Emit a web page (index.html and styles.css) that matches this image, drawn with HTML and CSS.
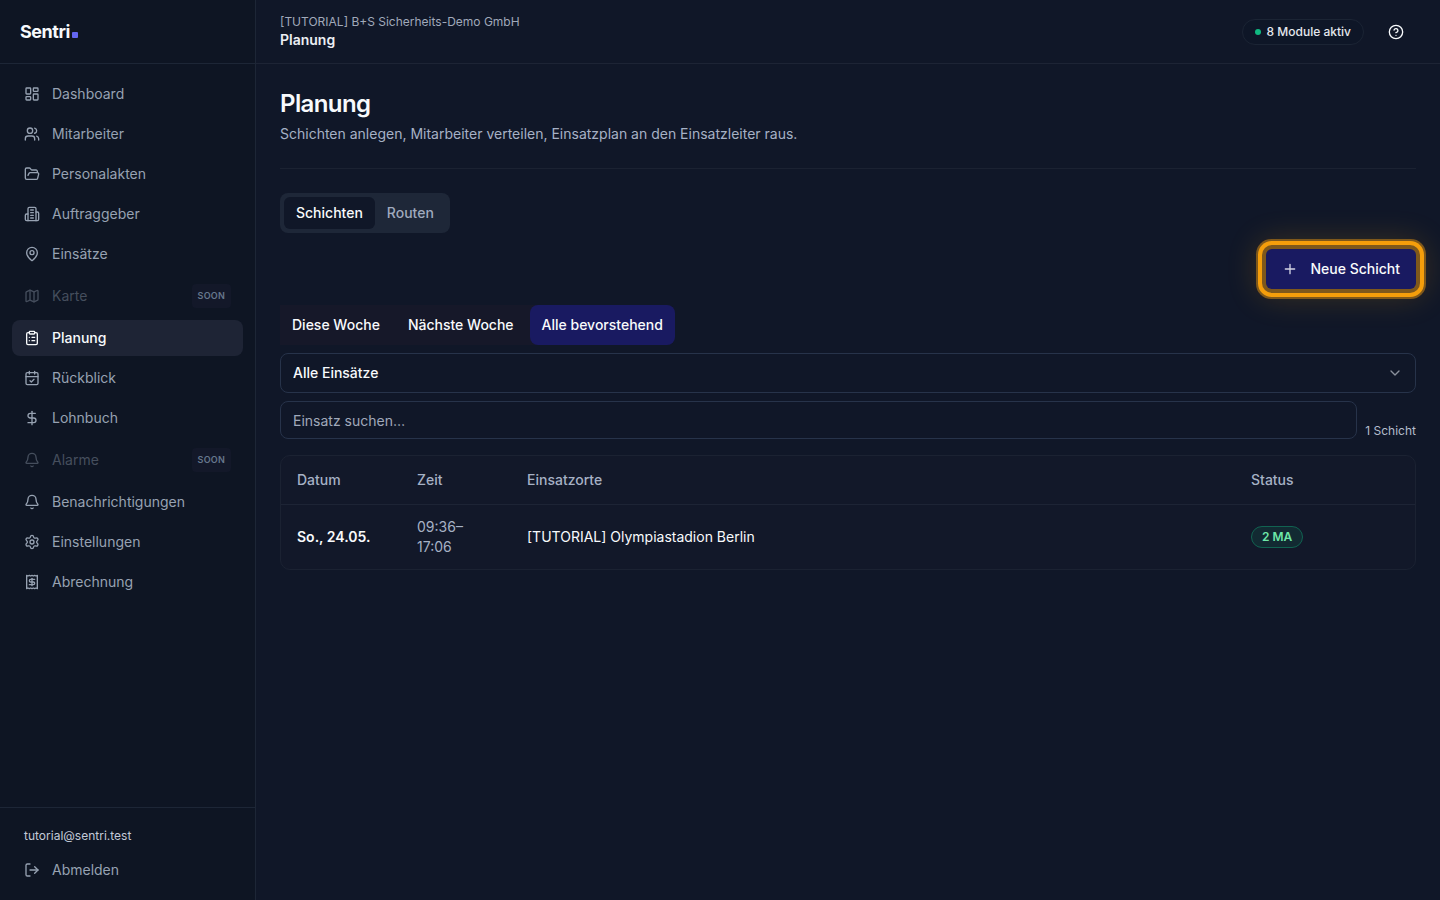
FILE: index.html
```html
<!DOCTYPE html>
<html lang="de">
<head>
<meta charset="utf-8">
<title>Planung – Sentri</title>
<link rel="stylesheet" href="styles.css">
</head>
<body>
<div class="app">
  <aside class="sidebar">
    <div class="brand"><a class="logo" href="#">Sentri<span class="logo-dot"></span></a></div>
    <nav class="nav">
      <a class="nav-item" href="#"><svg class="icon" viewBox="0 0 24 24"><rect width="7" height="9" x="3" y="3" rx="1"/><rect width="7" height="5" x="14" y="3" rx="1"/><rect width="7" height="9" x="14" y="12" rx="1"/><rect width="7" height="5" x="3" y="16" rx="1"/></svg>Dashboard</a>
      <a class="nav-item" href="#"><svg class="icon" viewBox="0 0 24 24"><path d="M16 21v-2a4 4 0 0 0-4-4H6a4 4 0 0 0-4 4v2"/><circle cx="9" cy="7" r="4"/><path d="M22 21v-2a4 4 0 0 0-3-3.87"/><path d="M16 3.13a4 4 0 0 1 0 7.75"/></svg>Mitarbeiter</a>
      <a class="nav-item" href="#"><svg class="icon" viewBox="0 0 24 24"><path d="m6 14 1.5-2.9A2 2 0 0 1 9.24 10H20a2 2 0 0 1 1.94 2.5l-1.54 6a2 2 0 0 1-1.95 1.5H4a2 2 0 0 1-2-2V5a2 2 0 0 1 2-2h3.9a2 2 0 0 1 1.69.9l.81 1.2a2 2 0 0 0 1.67.9H18a2 2 0 0 1 2 2v2"/></svg>Personalakten</a>
      <a class="nav-item" href="#"><svg class="icon" viewBox="0 0 24 24"><path d="M6 22V4a2 2 0 0 1 2-2h8a2 2 0 0 1 2 2v18Z"/><path d="M6 12H4a2 2 0 0 0-2 2v6a2 2 0 0 0 2 2h2"/><path d="M18 9h2a2 2 0 0 1 2 2v9a2 2 0 0 1-2 2h-2"/><path d="M10 6h4M10 10h4M10 14h4M10 18h4"/></svg>Auftraggeber</a>
      <a class="nav-item" href="#"><svg class="icon" viewBox="0 0 24 24"><path d="M20 10c0 4.993-5.539 10.193-7.399 11.799a1 1 0 0 1-1.202 0C9.539 20.193 4 14.993 4 10a8 8 0 0 1 16 0"/><circle cx="12" cy="10" r="3"/></svg>Einsätze</a>
      <span class="nav-item disabled"><svg class="icon" viewBox="0 0 24 24"><path d="M14.106 5.553a2 2 0 0 0 1.788 0l3.659-1.83A1 1 0 0 1 21 4.619v12.764a1 1 0 0 1-.553.894l-4.553 2.277a2 2 0 0 1-1.788 0l-4.212-2.106a2 2 0 0 0-1.788 0l-3.659 1.83A1 1 0 0 1 3 19.381V6.618a1 1 0 0 1 .553-.894l4.553-2.277a2 2 0 0 1 1.788 0z"/><path d="M15 5.764v15M9 3.236v15"/></svg>Karte<span class="soon">SOON</span></span>
      <a class="nav-item active" href="#" aria-current="page"><svg class="icon" viewBox="0 0 24 24"><rect width="8" height="4" x="8" y="2" rx="1"/><path d="M16 4h2a2 2 0 0 1 2 2v14a2 2 0 0 1-2 2H6a2 2 0 0 1-2-2V6a2 2 0 0 1 2-2h2"/><path d="M12 11h4M12 16h4M8 11h.01M8 16h.01"/></svg>Planung</a>
      <a class="nav-item" href="#"><svg class="icon" viewBox="0 0 24 24"><path d="M8 2v4M16 2v4"/><rect width="18" height="18" x="3" y="4" rx="2"/><path d="M3 10h18"/><path d="m9 16 2 2 4-4"/></svg>Rückblick</a>
      <a class="nav-item" href="#"><svg class="icon" viewBox="0 0 24 24"><path d="M12 2v20"/><path d="M17 5H9.5a3.5 3.5 0 0 0 0 7h5a3.5 3.5 0 0 1 0 7H6"/></svg>Lohnbuch</a>
      <span class="nav-item disabled"><svg class="icon" viewBox="0 0 24 24"><path d="M10.268 21a2 2 0 0 0 3.464 0"/><path d="M3.262 15.326A1 1 0 0 0 4 17h16a1 1 0 0 0 .74-1.673C19.41 13.956 18 12.499 18 8A6 6 0 0 0 6 8c0 4.499-1.411 5.956-2.738 7.326"/></svg>Alarme<span class="soon">SOON</span></span>
      <a class="nav-item" href="#"><svg class="icon" viewBox="0 0 24 24"><path d="M10.268 21a2 2 0 0 0 3.464 0"/><path d="M3.262 15.326A1 1 0 0 0 4 17h16a1 1 0 0 0 .74-1.673C19.41 13.956 18 12.499 18 8A6 6 0 0 0 6 8c0 4.499-1.411 5.956-2.738 7.326"/></svg>Benachrichtigungen</a>
      <a class="nav-item" href="#"><svg class="icon" viewBox="0 0 24 24"><path d="M9.671 4.136a2.34 2.34 0 0 1 4.659 0 2.34 2.34 0 0 0 3.319 1.915 2.34 2.34 0 0 1 2.33 4.033 2.34 2.34 0 0 0 0 3.831 2.34 2.34 0 0 1-2.33 4.033 2.34 2.34 0 0 0-3.319 1.915 2.34 2.34 0 0 1-4.659 0 2.34 2.34 0 0 0-3.32-1.915 2.34 2.34 0 0 1-2.33-4.033 2.34 2.34 0 0 0 0-3.831A2.34 2.34 0 0 1 6.35 6.051a2.34 2.34 0 0 0 3.319-1.915"/><circle cx="12" cy="12" r="3"/></svg>Einstellungen</a>
      <a class="nav-item" href="#"><svg class="icon" viewBox="0 0 24 24"><path d="M4 2v20l2-1 2 1 2-1 2 1 2-1 2 1 2-1 2 1V2l-2 1-2-1-2 1-2-1-2 1-2-1-2 1Z"/><path d="M16 8h-6a2 2 0 1 0 0 4h4a2 2 0 1 1 0 4H8"/><path d="M12 17.5v-11"/></svg>Abrechnung</a>
    </nav>
    <div class="account">
      <div class="email">tutorial@sentri.test</div>
      <button class="nav-item" type="button"><svg class="icon" viewBox="0 0 24 24"><path d="m16 17 5-5-5-5"/><path d="M21 12H9"/><path d="M9 21H5a2 2 0 0 1-2-2V5a2 2 0 0 1 2-2h4"/></svg>Abmelden</button>
    </div>
  </aside>

  <div class="page">
    <header class="topbar">
      <div>
        <div class="tenant">[TUTORIAL] B+S Sicherheits-Demo GmbH</div>
        <div class="section">Planung</div>
      </div>
      <div class="topbar-actions">
        <span class="modules"><span class="modules-dot"></span>8 Module aktiv</span>
        <button class="help" type="button" aria-label="Hilfe"><svg class="icon" viewBox="0 0 24 24"><circle cx="12" cy="12" r="10"/><path d="M9.09 9a3 3 0 0 1 5.83 1c0 2-3 3-3 3"/><path d="M12 17h.01"/></svg></button>
      </div>
    </header>

    <main class="content">
      <div class="intro">
        <h1>Planung</h1>
        <p>Schichten anlegen, Mitarbeiter verteilen, Einsatzplan an den Einsatzleiter raus.</p>
      </div>

      <div class="tabs" role="tablist">
        <button class="tab selected" type="button" role="tab" aria-selected="true">Schichten</button>
        <button class="tab" type="button" role="tab" aria-selected="false">Routen</button>
      </div>

      <div class="actions">
        <button class="new-shift" type="button"><svg class="icon" viewBox="0 0 24 24"><path d="M5 12h14M12 5v14"/></svg>Neue Schicht</button>
      </div>

      <div class="filters">
        <div class="ranges">
          <button class="range" type="button">Diese Woche</button>
          <button class="range" type="button">Nächste Woche</button>
          <button class="range selected" type="button">Alle bevorstehend</button>
        </div>
        <div class="select-wrap">
          <select class="field select" aria-label="Einsatz"><option>Alle Einsätze</option></select>
          <svg class="icon chevron" viewBox="0 0 24 24"><path d="m6 9 6 6 6-6"/></svg>
        </div>
        <div class="search-row">
          <input class="field search" type="text" placeholder="Einsatz suchen…" aria-label="Einsatz suchen">
          <span class="count">1 Schicht</span>
        </div>
      </div>

      <div class="card">
        <table class="shifts">
          <thead><tr><th class="col-date">Datum</th><th class="col-time">Zeit</th><th>Einsatzorte</th><th class="col-status">Status</th></tr></thead>
          <tbody><tr><td class="date">So., 24.05.</td><td class="time">09:36–<br>17:06</td><td>[TUTORIAL] Olympiastadion Berlin</td><td><span class="badge">2 MA</span></td></tr></tbody>
        </table>
      </div>
    </main>
  </div>
</div>
</body>
</html>
```
FILE: styles.css
```css
* { box-sizing: border-box; }

body {
  margin: 0;
  background: #101728;
  color: #f8fafc;
  font-family: Inter, "Liberation Sans", sans-serif;
  font-size: 14px;
  line-height: 20px;
}

button, input, select { font: inherit; color: inherit; }
button { border: 0; background: none; padding: 0; cursor: pointer; }
a { color: inherit; text-decoration: none; }

.icon {
  width: 16px;
  height: 16px;
  flex: none;
  fill: none;
  stroke: currentColor;
  stroke-width: 2;
  stroke-linecap: round;
  stroke-linejoin: round;
}

.app { display: flex; min-height: 100vh; }

.sidebar {
  display: flex;
  flex-direction: column;
  width: 256px;
  flex: none;
  background: #0e1523;
  border-right: 1px solid #1d2636;
}

.brand {
  display: flex;
  align-items: center;
  height: 64px;
  padding: 0 20px;
  border-bottom: 1px solid #1d2636;
}
.logo {
  display: flex;
  align-items: baseline;
  gap: 2px;
  font-size: 18px;
  line-height: 28px;
  font-weight: 700;
  letter-spacing: -0.025em;
}
.logo-dot { width: 6px; height: 6px; background: #6366f1; border-radius: 1px; }

.nav { display: flex; flex-direction: column; gap: 4px; flex: 1; padding: 12px; }
.nav-item {
  display: flex;
  align-items: center;
  gap: 12px;
  width: 100%;
  padding: 8px 12px;
  border-radius: 8px;
  color: #97a2b2;
  text-align: left;
}
.nav-item.active { background: #1e2435; color: #f8fafc; font-weight: 500; }
.nav-item.disabled { color: #454e5d; }
.soon {
  margin-left: auto;
  padding: 2px 6px;
  border-radius: 4px;
  background: #131829;
  color: #66778c;
  font-size: 9px;
  font-weight: 600;
  letter-spacing: 0.025em;
}

.account { padding: 12px; border-top: 1px solid #1d2636; }
.email { padding: 8px 12px; color: #c3cad8; font-size: 12px; line-height: 16px; }

.page { flex: 1; min-width: 0; }
.topbar {
  display: flex;
  align-items: center;
  justify-content: space-between;
  height: 64px;
  padding: 0 24px;
  border-bottom: 1px solid #1d2435;
}
.tenant { color: #a0a9ba; font-size: 12px; line-height: 16px; }
.section { font-weight: 600; color: #eceff4; }
.topbar-actions { display: flex; align-items: center; gap: 12px; }
.modules {
  display: flex;
  align-items: center;
  gap: 6px;
  padding: 4px 12px;
  border: 1px solid #1b2434;
  border-radius: 999px;
  background: #0e1627;
  color: #e5e8ee;
  font-size: 12px;
  line-height: 16px;
  font-weight: 500;
}
.modules-dot { width: 6px; height: 6px; border-radius: 50%; background: #10b981; }
.help { display: grid; place-items: center; width: 40px; height: 40px; }

.content { padding: 24px; }
.intro { padding-bottom: 24px; border-bottom: 1px solid #1b2232; }
.intro h1 { margin: 0 0 4px; font-size: 24px; line-height: 32px; font-weight: 600; letter-spacing: -0.025em; }
.intro p { margin: 0; color: #a6b1c5; }

.tabs {
  display: inline-flex;
  margin-top: 24px;
  padding: 4px;
  border-radius: 8px;
  background: #1e2738;
  vertical-align: top;
}
.tab { padding: 6px 12px; border-radius: 6px; color: #a0aabe; font-weight: 500; }
.tab.selected { background: #101728; color: #f8fafc; }

.actions { display: flex; justify-content: flex-end; margin-top: 16px; }
.new-shift {
  display: flex;
  align-items: center;
  gap: 12px;
  padding: 10px 16px;
  border-radius: 6px;
  background: #191a61;
  font-weight: 500;
  box-shadow: 0 0 0 4px #7f581b, 0 0 0 8px #f59e0b, 0 0 0 10px #7f581b, 0 0 32px 8px rgba(245, 158, 11, 0.2);
}
.new-shift .icon { color: #d3d4e4; }

.filters { display: flex; flex-direction: column; gap: 8px; margin-top: 16px; }
.ranges { display: flex; gap: 4px; align-self: flex-start; border-radius: 0 8px 8px 0; background: #161829; }
.range { padding: 10px 12px; font-weight: 500; }
.range.selected { border-radius: 8px; background: #191a61; }

.field {
  width: 100%;
  padding: 0 12px;
  border: 1px solid #27334a;
  border-radius: 8px;
  background: #101728;
}
.select-wrap { display: grid; position: relative; }
.select { height: 40px; appearance: none; font-weight: 500; }
.chevron { position: absolute; right: 13px; top: 12px; color: #8a909c; pointer-events: none; }
.search-row { display: flex; align-items: flex-end; gap: 8px; }
.search { flex: 1; min-width: 0; height: 38px; }
.search::placeholder { color: #a0a9ba; opacity: 1; }
.count { color: #b4bdcd; font-size: 12px; line-height: 16px; }

.card { margin-top: 16px; border: 1px solid #1b2232; border-radius: 10px; background: #121829; overflow: hidden; }
.shifts { width: 100%; border-collapse: collapse; table-layout: fixed; }
.shifts th { height: 48px; padding: 0 16px; color: #a6b1c5; font-weight: 500; text-align: left; }
.shifts td { padding: 12px 16px; border-top: 1px solid #1d2435; }
.col-date { width: 120px; }
.col-time { width: 110px; }
.col-status { width: 180px; }
.shifts .date { font-weight: 600; }
.shifts .time { color: #a6b1c5; }
.badge {
  display: inline-block;
  padding: 2px 10px;
  border: 1px solid #116351;
  border-radius: 999px;
  background: #122a32;
  color: #6ee7a8;
  font-size: 12px;
  line-height: 16px;
  font-weight: 600;
  vertical-align: middle;
}
```
